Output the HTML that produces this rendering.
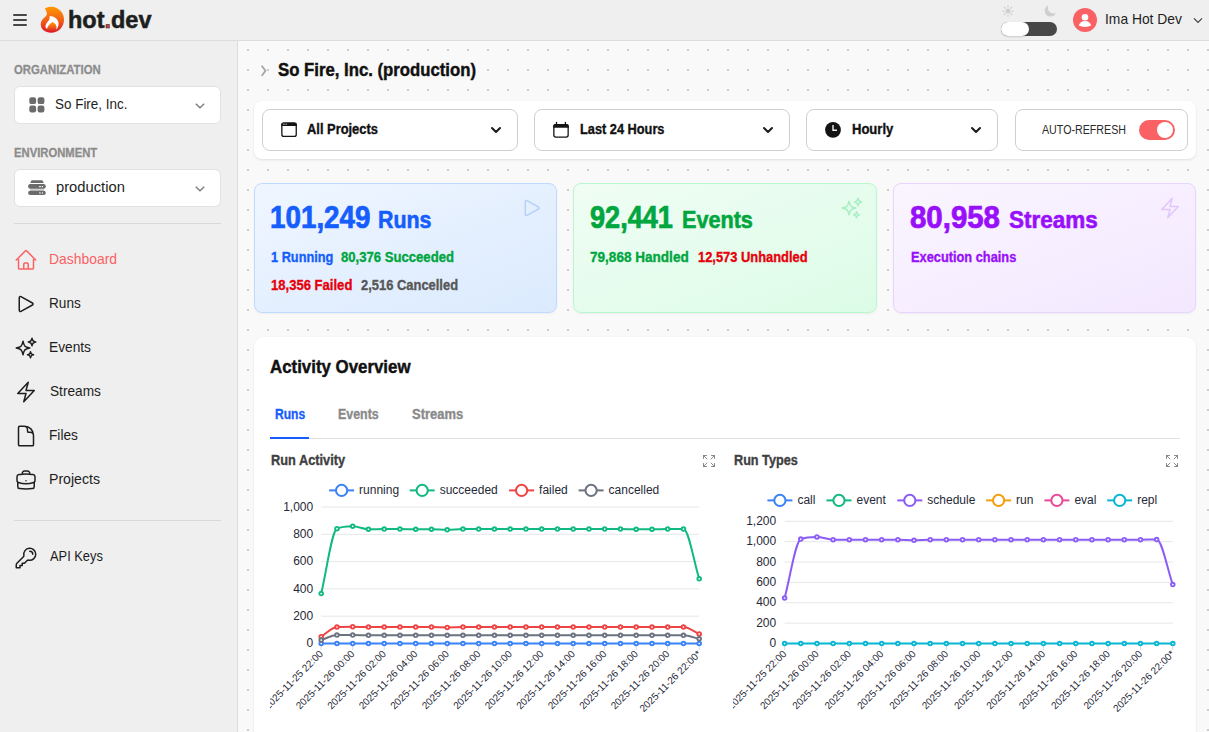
<!DOCTYPE html><html><head><meta charset="utf-8"><title>hot.dev</title><style>
html,body{margin:0;padding:0;}
body{width:1209px;height:732px;overflow:hidden;position:relative;background:#f9f9f9;font-family:"Liberation Sans", sans-serif;}
.t{position:absolute;white-space:nowrap;}
.b{position:absolute;box-sizing:border-box;}
.i{position:absolute;overflow:visible;}
</style></head><body>
<div class="b" style="left:238px;top:41px;width:971px;height:691px;background-color:#f9f9f9;background-image:radial-gradient(circle at 10px 9px,#cdcdcd 0.9px,transparent 1.2px);background-size:20px 20px;background-position:0px 0px;"></div>
<div class="b" style="left:0px;top:0px;width:1209px;height:40px;background:#efefef;"></div>
<div class="b" style="left:0px;top:40px;width:1209px;height:1px;background:#dcdcdc;"></div>
<div class="b" style="left:0px;top:41px;width:237px;height:691px;background:#efefef;"></div>
<div class="b" style="left:237px;top:41px;width:1px;height:691px;background:#dcdcdc;"></div>
<div class="b" style="left:13px;top:14px;width:14px;height:2px;background:#474747;border-radius:1px;"></div>
<div class="b" style="left:13px;top:19px;width:14px;height:2px;background:#474747;border-radius:1px;"></div>
<div class="b" style="left:13px;top:24px;width:14px;height:2px;background:#474747;border-radius:1px;"></div>
<svg class="i" style="left:36px;top:2px;" width="34" height="34" viewBox="0 0 34 34"><defs><linearGradient id="fl" x1="0" y1="0" x2="0" y2="1"><stop offset="0" stop-color="#ff9800"/><stop offset="0.5" stop-color="#f26318"/><stop offset="1" stop-color="#d91a26"/></linearGradient></defs>
<path d="M8.8 6.6 C12 4.5 17 4 20.5 6 C25.5 8.5 28.2 13 28 18 C27.8 25.5 22 30.8 15.2 30.8 C9 30.8 4.6 26.8 4.7 22 C4.8 19 6.8 16.8 9 15 C11 13.3 11.5 11.5 10.4 9.5 C10 8.5 9.5 7.5 8.8 6.6 Z" fill="url(#fl)"/>
<path d="M13.6 14 C18 14 22.5 17 22.6 21.5 C22.7 24.8 21.2 27 19.8 27.8 L10.2 26.4 C9.2 25 9.2 23.3 10.5 21.3 C11.8 19.3 14 18.2 13.6 14 Z" fill="#fff"/>
<path d="M16.3 20 C19 21 20.8 23 20.6 26 C20.4 28.5 18.5 29.8 15.5 29.8 C13 29.8 11 29 10.8 27.6 C11.5 25 13 22 16.3 20 Z" fill="url(#fl)"/></svg>
<div class="t" style="left:68.49px;top:8.78px;font-size:23.2px;line-height:23.2px;font-weight:700;color:#1e1e1e;letter-spacing:0.000px;transform:scaleX(1.0116);transform-origin:0 0;-webkit-text-stroke:0.56px #1e1e1e;">hot<span style="color:#e53935">.</span>dev</div>
<svg class="i" style="left:1002px;top:5px;" width="12" height="12" viewBox="0 0 24 24"><circle cx="12" cy="12" r="5" fill="#cfcfcf"/><g stroke="#cfcfcf" stroke-width="2.5" stroke-linecap="round"><path d="M12 1.5v2.5M12 20v2.5M1.5 12h2.5M20 12h2.5M4.6 4.6l1.8 1.8M17.6 17.6l1.8 1.8M4.6 19.4l1.8-1.8M17.6 6.4l1.8-1.8"/></g></svg>
<svg class="i" style="left:1043px;top:4px;" width="14" height="14" viewBox="0 0 24 24"><path d="M21.75 15.5A9.72 9.72 0 0 1 18 16.25 9.75 9.75 0 0 1 8.25 6.5c0-1.33.27-2.6.75-3.75A9.75 9.75 0 0 0 3 11.75 9.75 9.75 0 0 0 12.75 21.5a9.75 9.75 0 0 0 9-6Z" fill="#cfcfcf"/></svg>
<div class="b" style="left:1001px;top:22px;width:56px;height:14px;background:#474747;border-radius:7px;"></div>
<div class="b" style="left:1001px;top:22px;width:28px;height:14px;background:#fff;border-radius:7px;box-shadow:0 1px 2px rgba(0,0,0,0.15);"></div>
<div class="b" style="left:1073px;top:8px;width:24px;height:24px;background:#fa6164;border-radius:50%;"></div>
<svg class="i" style="left:1073px;top:8px;" width="24" height="24" viewBox="0 0 24 24"><circle cx="12" cy="9.3" r="3.3" fill="#fff"/><path d="M5.8 17.6c0.6-2.9 3.2-4.6 6.2-4.6s5.6 1.7 6.2 4.6c-1.6 0.9-3.9 1.3-6.2 1.3s-4.6-0.4-6.2-1.3z" fill="#fff"/></svg>
<div class="t" style="left:1104.65px;top:11.68px;font-size:14.5px;line-height:14.5px;font-weight:400;color:#1e1e1e;letter-spacing:0.000px;transform:scaleX(0.9548);transform-origin:0 0;">Ima Hot Dev</div>
<svg class="i" style="left:1192px;top:16px;" width="12" height="9" viewBox="0 0 12 9"><path d="M2 2.4 6 6.4 10 2.4" fill="none" stroke="#444" stroke-width="1.3"/></svg>
<div class="t" style="left:14.20px;top:64.34px;font-size:12.3px;line-height:12.3px;font-weight:700;color:#8c8c8c;letter-spacing:0.000px;transform:scaleX(0.9218);transform-origin:0 0;-webkit-text-stroke:0.30px #8c8c8c;">ORGANIZATION</div>
<div class="b" style="left:14px;top:86px;width:207px;height:38px;background:#fff;border:1px solid #e2e2e2;border-radius:6px;"></div>
<svg class="i" style="left:29px;top:97px;" width="16" height="16" viewBox="0 0 16 16"><rect x="0.3" y="0.3" width="6.8" height="6.8" rx="2.2" fill="#6b6b6b"/><rect x="8.6" y="0.3" width="6.8" height="6.8" rx="2.2" fill="#6b6b6b"/><rect x="0.3" y="8.6" width="6.8" height="6.8" rx="2.2" fill="#6b6b6b"/><rect x="8.6" y="8.6" width="6.8" height="6.8" rx="2.2" fill="#6b6b6b"/></svg>
<div class="t" style="left:55.20px;top:96.67px;font-size:14.5px;line-height:14.5px;font-weight:400;color:#1e1e1e;letter-spacing:0.000px;transform:scaleX(0.9269);transform-origin:0 0;">So Fire, Inc.</div>
<svg class="i" style="left:195px;top:103px;" width="10" height="6" viewBox="0 0 10 6"><path d="M0.8 0.8 5 4.8 9.2 0.8" fill="none" stroke="#7a7a7a" stroke-width="1.3"/></svg>
<div class="t" style="left:14.30px;top:146.74px;font-size:12.3px;line-height:12.3px;font-weight:700;color:#8c8c8c;letter-spacing:0.000px;transform:scaleX(0.9162);transform-origin:0 0;-webkit-text-stroke:0.30px #8c8c8c;">ENVIRONMENT</div>
<div class="b" style="left:14px;top:169px;width:207px;height:38px;background:#fff;border:1px solid #e2e2e2;border-radius:6px;"></div>
<svg class="i" style="left:24px;top:176px;" width="26" height="24" viewBox="0 0 26 24"><path d="M6.2 7 7.6 4.2H18.4L19.8 7Z" fill="#6b6b6b"/><rect x="6" y="12.6" width="14" height="2.4" fill="#cfcfcf"/><rect x="4.1" y="8" width="17.7" height="4.8" rx="2.3" fill="#6b6b6b"/><rect x="4.1" y="14.8" width="17.7" height="4.3" rx="2.1" fill="#6b6b6b"/><g fill="#fff"><rect x="15.2" y="10" width="1.6" height="1.2"/><rect x="17.8" y="10" width="1.2" height="1.2"/><rect x="15.2" y="16.4" width="1.4" height="1.2"/><rect x="17.8" y="16.4" width="1.2" height="1.2"/></g></svg>
<div class="t" style="left:55.60px;top:179.68px;font-size:14.5px;line-height:14.5px;font-weight:400;color:#1e1e1e;letter-spacing:0.000px;transform:scaleX(1.0170);transform-origin:0 0;">production</div>
<svg class="i" style="left:195px;top:186px;" width="10" height="6" viewBox="0 0 10 6"><path d="M0.8 0.8 5 4.8 9.2 0.8" fill="none" stroke="#7a7a7a" stroke-width="1.3"/></svg>
<div class="b" style="left:14px;top:223px;width:207px;height:1px;background:#d9d9d9;"></div>
<div class="b" style="left:14px;top:520px;width:207px;height:1px;background:#d9d9d9;"></div>
<svg class="i" style="left:14px;top:248px;" width="24" height="24" viewBox="0 0 24 24"><path d="m2.25 12 8.954-8.955c.44-.439 1.152-.439 1.591 0L21.75 12M4.5 9.75v10.125c0 .621.504 1.125 1.125 1.125H9.75v-4.875c0-.621.504-1.125 1.125-1.125h2.25c.621 0 1.125.504 1.125 1.125V21h4.125c.621 0 1.125-.504 1.125-1.125V9.75M8.25 21h8.25" fill="none" stroke="#fa6164" stroke-width="1.5" stroke-linecap="round" stroke-linejoin="round"/></svg>
<div class="t" style="left:48.94px;top:251.68px;font-size:14.5px;line-height:14.5px;font-weight:400;color:#fa6164;letter-spacing:0.000px;transform:scaleX(0.9589);transform-origin:0 0;">Dashboard</div>
<svg class="i" style="left:14px;top:292px;" width="24" height="24" viewBox="0 0 24 24"><path d="M5.25 5.653c0-.856.917-1.398 1.667-.986l11.54 6.347a1.125 1.125 0 0 1 0 1.972l-11.54 6.347a1.125 1.125 0 0 1-1.667-.986V5.653Z" fill="none" stroke="#1e1e1e" stroke-width="1.5" stroke-linecap="round" stroke-linejoin="round"/></svg>
<div class="t" style="left:48.96px;top:295.68px;font-size:14.5px;line-height:14.5px;font-weight:400;color:#1e1e1e;letter-spacing:0.000px;transform:scaleX(0.9387);transform-origin:0 0;">Runs</div>
<svg class="i" style="left:14px;top:336px;" width="24" height="24" viewBox="0 0 24 24"><path d="M9.813 15.904 9 18.75l-.813-2.846a4.5 4.5 0 0 0-3.09-3.09L2.25 12l2.846-.813a4.5 4.5 0 0 0 3.09-3.09L9 5.25l.813 2.846a4.5 4.5 0 0 0 3.09 3.09L15.75 12l-2.846.813a4.5 4.5 0 0 0-3.09 3.09ZM18.259 8.715 18 9.75l-.259-1.035a3.375 3.375 0 0 0-2.455-2.456L14.25 6l1.036-.259a3.375 3.375 0 0 0 2.455-2.456L18 2.25l.259 1.035a3.375 3.375 0 0 0 2.456 2.456L21.75 6l-1.035.259a3.375 3.375 0 0 0-2.456 2.456ZM16.894 20.567 16.5 21.75l-.394-1.183a2.25 2.25 0 0 0-1.423-1.423L13.5 18.75l1.183-.394a2.25 2.25 0 0 0 1.423-1.423l.394-1.183.394 1.183a2.25 2.25 0 0 0 1.423 1.423l1.183.394-1.183.394a2.25 2.25 0 0 0-1.423 1.423Z" fill="none" stroke="#1e1e1e" stroke-width="1.5" stroke-linecap="round" stroke-linejoin="round"/></svg>
<div class="t" style="left:48.95px;top:339.68px;font-size:14.5px;line-height:14.5px;font-weight:400;color:#1e1e1e;letter-spacing:0.000px;transform:scaleX(0.9471);transform-origin:0 0;">Events</div>
<svg class="i" style="left:14px;top:380px;" width="24" height="24" viewBox="0 0 24 24"><path d="m3.75 13.5 10.5-11.25L12 10.5h8.25L9.75 21.75 12 13.5H3.75Z" fill="none" stroke="#1e1e1e" stroke-width="1.5" stroke-linecap="round" stroke-linejoin="round"/></svg>
<div class="t" style="left:49.90px;top:383.68px;font-size:14.5px;line-height:14.5px;font-weight:400;color:#1e1e1e;letter-spacing:0.000px;transform:scaleX(0.9435);transform-origin:0 0;">Streams</div>
<svg class="i" style="left:14px;top:424px;" width="24" height="24" viewBox="0 0 24 24"><path d="M19.5 14.25v-2.625a3.375 3.375 0 0 0-3.375-3.375h-1.5A1.125 1.125 0 0 1 13.5 7.125v-1.5a3.375 3.375 0 0 0-3.375-3.375H8.25m2.25 0H5.625c-.621 0-1.125.504-1.125 1.125v17.25c0 .621.504 1.125 1.125 1.125h12.75c.621 0 1.125-.504 1.125-1.125V11.25a9 9 0 0 0-9-9Z" fill="none" stroke="#1e1e1e" stroke-width="1.5" stroke-linecap="round" stroke-linejoin="round"/></svg>
<div class="t" style="left:48.96px;top:427.68px;font-size:14.5px;line-height:14.5px;font-weight:400;color:#1e1e1e;letter-spacing:0.000px;transform:scaleX(0.9433);transform-origin:0 0;">Files</div>
<svg class="i" style="left:14px;top:468px;" width="24" height="24" viewBox="0 0 24 24"><path d="M20.25 14.15v4.25c0 1.094-.787 2.036-1.872 2.18-2.087.277-4.216.42-6.378.42s-4.291-.143-6.378-.42c-1.085-.144-1.872-1.086-1.872-2.18v-4.25m16.5 0a2.18 2.18 0 0 0 .75-1.661V8.706c0-1.081-.768-2.015-1.837-2.175a48.114 48.114 0 0 0-3.413-.387m4.5 8.006c-.194.165-.42.295-.673.38A23.978 23.978 0 0 1 12 15.75c-2.648 0-5.195-.429-7.577-1.22a2.016 2.016 0 0 1-.673-.38m0 0A2.18 2.18 0 0 1 3 12.489V8.706c0-1.081.768-2.015 1.837-2.175a48.111 48.111 0 0 1 3.413-.387m7.5 0V5.25A2.25 2.25 0 0 0 13.5 3h-3a2.25 2.25 0 0 0-2.25 2.25v.894m7.5 0a48.667 48.667 0 0 0-7.5 0M12 12.75h.008v.008H12v-.008Z" fill="none" stroke="#1e1e1e" stroke-width="1.5" stroke-linecap="round" stroke-linejoin="round"/></svg>
<div class="t" style="left:48.93px;top:471.68px;font-size:14.5px;line-height:14.5px;font-weight:400;color:#1e1e1e;letter-spacing:0.000px;transform:scaleX(0.9740);transform-origin:0 0;">Projects</div>
<svg class="i" style="left:14px;top:546px;" width="24" height="24" viewBox="0 0 24 24"><path d="M15.75 5.25a3 3 0 0 1 3 3m3 0a6 6 0 0 1-7.029 5.912c-.563-.097-1.159.026-1.563.43L10.5 17.25H8.25v2.25H6v2.25H2.25v-2.818c0-.597.237-1.17.659-1.591l6.499-6.499c.404-.404.527-1 .43-1.563A6 6 0 1 1 21.75 8.25Z" fill="none" stroke="#1e1e1e" stroke-width="1.5" stroke-linecap="round" stroke-linejoin="round"/></svg>
<div class="t" style="left:49.90px;top:548.67px;font-size:14.5px;line-height:14.5px;font-weight:400;color:#1e1e1e;letter-spacing:0.000px;transform:scaleX(0.8857);transform-origin:0 0;">API Keys</div>
<svg class="i" style="left:255px;top:60px;" width="20" height="22" viewBox="0 0 20 22"><path d="M7.1 6.3 10.5 10.8 7.2 15.3" fill="none" stroke="#a6a6a6" stroke-width="1.9" stroke-linecap="round" stroke-linejoin="round"/></svg>
<div class="t" style="left:278.20px;top:61.10px;font-size:18px;line-height:18px;font-weight:700;color:#111;letter-spacing:0.000px;transform:scaleX(0.9296);transform-origin:0 0;-webkit-text-stroke:0.43px #111;">So Fire, Inc. (production)</div>
<div class="b" style="left:254px;top:101px;width:942px;height:58px;background:#fff;border-radius:8px;box-shadow:0 1px 3px rgba(0,0,0,0.07),0 1px 2px rgba(0,0,0,0.04);"></div>
<div class="b" style="left:262px;top:109px;width:256px;height:42px;background:#fff;border:1px solid #cfcfcf;border-radius:8px;"></div>
<div class="b" style="left:534px;top:109px;width:256px;height:42px;background:#fff;border:1px solid #cfcfcf;border-radius:8px;"></div>
<div class="b" style="left:806px;top:109px;width:192px;height:42px;background:#fff;border:1px solid #cfcfcf;border-radius:8px;"></div>
<div class="b" style="left:1015px;top:109px;width:173px;height:42px;background:#fff;border:1px solid #cfcfcf;border-radius:8px;"></div>
<svg class="i" style="left:491px;top:127px;" width="10" height="6" viewBox="0 0 10 6"><path d="M1 1 5 5 9 1" fill="none" stroke="#1a1a1a" stroke-width="2" stroke-linecap="round" stroke-linejoin="round"/></svg>
<svg class="i" style="left:763px;top:127px;" width="10" height="6" viewBox="0 0 10 6"><path d="M1 1 5 5 9 1" fill="none" stroke="#1a1a1a" stroke-width="2" stroke-linecap="round" stroke-linejoin="round"/></svg>
<svg class="i" style="left:971px;top:127px;" width="10" height="6" viewBox="0 0 10 6"><path d="M1 1 5 5 9 1" fill="none" stroke="#1a1a1a" stroke-width="2" stroke-linecap="round" stroke-linejoin="round"/></svg>
<svg class="i" style="left:276px;top:116px;" width="26" height="26" viewBox="0 0 26 26"><rect x="5.85" y="7.25" width="14.4" height="13.2" rx="2" fill="none" stroke="#141414" stroke-width="1.3"/><path d="M5.2 10V8.9Q5.2 6.6 7.5 6.6H18.6Q20.9 6.6 20.9 8.9V10Z" fill="#141414"/><g fill="#fff"><rect x="6.9" y="7.7" width="0.9" height="0.9"/><rect x="8.4" y="7.7" width="0.9" height="0.9"/><rect x="9.9" y="7.7" width="0.9" height="0.9"/></g></svg>
<div class="t" style="left:307.20px;top:122.37px;font-size:14.5px;line-height:14.5px;font-weight:700;color:#111;letter-spacing:0.000px;transform:scaleX(0.8882);transform-origin:0 0;-webkit-text-stroke:0.35px #111;">All Projects</div>
<svg class="i" style="left:548px;top:116px;" width="26" height="26" viewBox="0 0 26 26"><rect x="5.85" y="8.65" width="14.3" height="12.4" rx="2" fill="none" stroke="#141414" stroke-width="1.3"/><path d="M5.2 11.7V10.3Q5.2 8 7.5 8H18.5Q20.8 8 20.8 10.3V11.7Z" fill="#141414"/><path d="M8.5 6.3V8.6M17.4 6.3V8.6" stroke="#141414" stroke-width="1.3" stroke-linecap="round"/></svg>
<div class="t" style="left:579.60px;top:122.37px;font-size:14.5px;line-height:14.5px;font-weight:700;color:#111;letter-spacing:0.000px;transform:scaleX(0.8807);transform-origin:0 0;-webkit-text-stroke:0.35px #111;">Last 24 Hours</div>
<svg class="i" style="left:825px;top:122px;" width="16" height="16" viewBox="0 0 16 16"><circle cx="8" cy="7.8" r="7.9" fill="#141414"/><path d="M8 2.9V8.2H12" fill="none" stroke="#f2f2f2" stroke-width="1.4"/></svg>
<div class="t" style="left:851.70px;top:122.37px;font-size:14.5px;line-height:14.5px;font-weight:700;color:#111;letter-spacing:0.000px;transform:scaleX(0.8984);transform-origin:0 0;-webkit-text-stroke:0.35px #111;">Hourly</div>
<div class="t" style="left:1042.00px;top:124.47px;font-size:12.5px;line-height:12.5px;font-weight:400;color:#2a2a2a;letter-spacing:0.000px;transform:scaleX(0.8540);transform-origin:0 0;">AUTO-REFRESH</div>
<div class="b" style="left:1139px;top:120px;width:36px;height:20px;background:#fa6164;border-radius:10px;"></div>
<div class="b" style="left:1157px;top:122px;width:16px;height:16px;background:#fff;border-radius:50%;"></div>
<div class="b" style="left:254px;top:183px;width:303px;height:130px;background:linear-gradient(160deg,#eff6ff 0%,#dbeafe 100%);border:1px solid #bedbff;border-radius:8px;box-shadow:0 1px 2px rgba(0,0,0,0.05);"></div>
<div class="b" style="left:573px;top:183px;width:304px;height:130px;background:linear-gradient(160deg,#f0fdf4 0%,#dcfce7 100%);border:1px solid #b9f8cf;border-radius:8px;box-shadow:0 1px 2px rgba(0,0,0,0.05);"></div>
<div class="b" style="left:893px;top:183px;width:303px;height:130px;background:linear-gradient(160deg,#faf5ff 0%,#f3e8ff 100%);border:1px solid #e9d4ff;border-radius:8px;box-shadow:0 1px 2px rgba(0,0,0,0.05);"></div>
<svg class="i" style="left:520px;top:196px;" width="24" height="24" viewBox="0 0 24 24"><path d="M5.25 5.653c0-.856.917-1.398 1.667-.986l11.54 6.347a1.125 1.125 0 0 1 0 1.972l-11.54 6.347a1.125 1.125 0 0 1-1.667-.986V5.653Z" fill="none" stroke="#b6d0fb" stroke-width="1.5" stroke-linecap="round" stroke-linejoin="round"/></svg>
<svg class="i" style="left:840px;top:196px;" width="24" height="24" viewBox="0 0 24 24"><path d="M9.813 15.904 9 18.75l-.813-2.846a4.5 4.5 0 0 0-3.09-3.09L2.25 12l2.846-.813a4.5 4.5 0 0 0 3.09-3.09L9 5.25l.813 2.846a4.5 4.5 0 0 0 3.09 3.09L15.75 12l-2.846.813a4.5 4.5 0 0 0-3.09 3.09ZM18.259 8.715 18 9.75l-.259-1.035a3.375 3.375 0 0 0-2.455-2.456L14.25 6l1.036-.259a3.375 3.375 0 0 0 2.455-2.456L18 2.25l.259 1.035a3.375 3.375 0 0 0 2.456 2.456L21.75 6l-1.035.259a3.375 3.375 0 0 0-2.456 2.456ZM16.894 20.567 16.5 21.75l-.394-1.183a2.25 2.25 0 0 0-1.423-1.423L13.5 18.75l1.183-.394a2.25 2.25 0 0 0 1.423-1.423l.394-1.183.394 1.183a2.25 2.25 0 0 0 1.423 1.423l1.183.394-1.183.394a2.25 2.25 0 0 0-1.423 1.423Z" fill="none" stroke="#a7eec3" stroke-width="1.5" stroke-linecap="round" stroke-linejoin="round"/></svg>
<svg class="i" style="left:1158px;top:196px;" width="24" height="24" viewBox="0 0 24 24"><path d="m3.75 13.5 10.5-11.25L12 10.5h8.25L9.75 21.75 12 13.5H3.75Z" fill="none" stroke="#e2c6fa" stroke-width="1.5" stroke-linecap="round" stroke-linejoin="round"/></svg>
<div class="t" style="left:270.39px;top:202.07px;font-size:30.5px;line-height:30.5px;font-weight:700;color:#155dfc;letter-spacing:0.000px;transform:scaleX(0.9115);transform-origin:0 0;-webkit-text-stroke:0.74px #155dfc;">101,249</div>
<div class="t" style="left:377.89px;top:209.03px;font-size:23.5px;line-height:23.5px;font-weight:700;color:#155dfc;letter-spacing:0.000px;transform:scaleX(0.9102);transform-origin:0 0;-webkit-text-stroke:0.57px #155dfc;">Runs</div>
<div class="t" style="left:271.20px;top:249.68px;font-size:14.5px;line-height:14.5px;font-weight:700;color:#155dfc;letter-spacing:0.000px;transform:scaleX(0.8797);transform-origin:0 0;-webkit-text-stroke:0.35px #155dfc;">1 Running</div>
<div class="t" style="left:341.40px;top:249.68px;font-size:14.5px;line-height:14.5px;font-weight:700;color:#00a63e;letter-spacing:0.000px;transform:scaleX(0.9042);transform-origin:0 0;-webkit-text-stroke:0.35px #00a63e;">80,376 Succeeded</div>
<div class="t" style="left:271.20px;top:277.68px;font-size:14.5px;line-height:14.5px;font-weight:700;color:#e7000b;letter-spacing:0.000px;transform:scaleX(0.9014);transform-origin:0 0;-webkit-text-stroke:0.35px #e7000b;">18,356 Failed</div>
<div class="t" style="left:360.60px;top:277.68px;font-size:14.5px;line-height:14.5px;font-weight:700;color:#575757;letter-spacing:0.000px;transform:scaleX(0.8920);transform-origin:0 0;-webkit-text-stroke:0.35px #575757;">2,516 Cancelled</div>
<div class="t" style="left:590.01px;top:202.07px;font-size:30.5px;line-height:30.5px;font-weight:700;color:#00a63e;letter-spacing:0.000px;transform:scaleX(0.8882);transform-origin:0 0;-webkit-text-stroke:0.74px #00a63e;">92,441</div>
<div class="t" style="left:681.88px;top:209.03px;font-size:23.5px;line-height:23.5px;font-weight:700;color:#00a63e;letter-spacing:0.000px;transform:scaleX(0.9198);transform-origin:0 0;-webkit-text-stroke:0.57px #00a63e;">Events</div>
<div class="t" style="left:590.30px;top:249.68px;font-size:14.5px;line-height:14.5px;font-weight:700;color:#00a63e;letter-spacing:0.000px;transform:scaleX(0.9349);transform-origin:0 0;-webkit-text-stroke:0.35px #00a63e;">79,868 Handled</div>
<div class="t" style="left:697.50px;top:249.68px;font-size:14.5px;line-height:14.5px;font-weight:700;color:#e7000b;letter-spacing:0.000px;transform:scaleX(0.8886);transform-origin:0 0;-webkit-text-stroke:0.35px #e7000b;">12,573 Unhandled</div>
<div class="t" style="left:910.40px;top:202.07px;font-size:30.5px;line-height:30.5px;font-weight:700;color:#9810fa;letter-spacing:0.000px;transform:scaleX(0.9644);transform-origin:0 0;-webkit-text-stroke:0.74px #9810fa;">80,958</div>
<div class="t" style="left:1009.00px;top:209.03px;font-size:23.5px;line-height:23.5px;font-weight:700;color:#9810fa;letter-spacing:0.000px;transform:scaleX(0.9571);transform-origin:0 0;-webkit-text-stroke:0.57px #9810fa;">Streams</div>
<div class="t" style="left:910.80px;top:249.68px;font-size:14.5px;line-height:14.5px;font-weight:700;color:#9810fa;letter-spacing:0.000px;transform:scaleX(0.8826);transform-origin:0 0;-webkit-text-stroke:0.35px #9810fa;">Execution chains</div>
<div class="b" style="left:254px;top:337px;width:942px;height:463px;background:#fff;border-radius:10px;box-shadow:0 1px 3px rgba(0,0,0,0.07),0 1px 2px rgba(0,0,0,0.04);"></div>
<div class="t" style="left:269.90px;top:357.64px;font-size:18.3px;line-height:18.3px;font-weight:700;color:#111;letter-spacing:0.000px;transform:scaleX(0.9217);transform-origin:0 0;-webkit-text-stroke:0.44px #111;">Activity Overview</div>
<div class="b" style="left:270px;top:438px;width:910px;height:1px;background:#e2e2e2;"></div>
<div class="b" style="left:270px;top:437px;width:39px;height:2px;background:#155dfc;"></div>
<div class="t" style="left:274.70px;top:406.80px;font-size:14px;line-height:14px;font-weight:700;color:#155dfc;letter-spacing:0.000px;transform:scaleX(0.8605);transform-origin:0 0;-webkit-text-stroke:0.34px #155dfc;">Runs</div>
<div class="t" style="left:337.80px;top:406.80px;font-size:14px;line-height:14px;font-weight:700;color:#8a8a8a;letter-spacing:0.000px;transform:scaleX(0.8867);transform-origin:0 0;-webkit-text-stroke:0.34px #8a8a8a;">Events</div>
<div class="t" style="left:411.50px;top:406.80px;font-size:14px;line-height:14px;font-weight:700;color:#8a8a8a;letter-spacing:0.000px;transform:scaleX(0.9248);transform-origin:0 0;-webkit-text-stroke:0.34px #8a8a8a;">Streams</div>
<div class="t" style="left:270.50px;top:452.78px;font-size:14.5px;line-height:14.5px;font-weight:700;color:#404040;letter-spacing:0.000px;transform:scaleX(0.8814);transform-origin:0 0;-webkit-text-stroke:0.35px #404040;">Run Activity</div>
<div class="t" style="left:733.90px;top:452.68px;font-size:14.5px;line-height:14.5px;font-weight:700;color:#404040;letter-spacing:0.000px;transform:scaleX(0.8728);transform-origin:0 0;-webkit-text-stroke:0.35px #404040;">Run Types</div>
<svg class="i" style="left:701px;top:453px;" width="16" height="16" viewBox="0 0 24 24"><path d="M3.75 3.75v4.5m0-4.5h4.5m-4.5 0L9 9M3.75 20.25v-4.5m0 4.5h4.5m-4.5 0L9 15M20.25 3.75h-4.5m4.5 0v4.5m0-4.5L15 9m5.25 11.25h-4.5m4.5 0v-4.5m0 4.5L15 15" fill="none" stroke="#858585" stroke-width="1.45" stroke-linecap="round" stroke-linejoin="round"/></svg>
<svg class="i" style="left:1164px;top:453px;" width="16" height="16" viewBox="0 0 24 24"><path d="M3.75 3.75v4.5m0-4.5h4.5m-4.5 0L9 9M3.75 20.25v-4.5m0 4.5h4.5m-4.5 0L9 15M20.25 3.75h-4.5m4.5 0v4.5m0-4.5L15 9m5.25 11.25h-4.5m4.5 0v-4.5m0 4.5L15 15" fill="none" stroke="#858585" stroke-width="1.45" stroke-linecap="round" stroke-linejoin="round"/></svg>
<svg class="i" style="left:0;top:0;" width="1209" height="732" viewBox="0 0 1209 732" font-family="Liberation Sans, sans-serif"><defs><clipPath id="cl"><rect x="270" y="470" width="446" height="262"/></clipPath><clipPath id="cr"><rect x="733" y="470" width="447" height="262"/></clipPath></defs><g clip-path="url(#cl)"><line x1="321.20" y1="643.50" x2="699.20" y2="643.50" stroke="#e5e7eb" stroke-width="1"/><text x="313.20" y="647.10" text-anchor="end" font-size="12" fill="#1f2937">0</text><line x1="321.20" y1="616.20" x2="699.20" y2="616.20" stroke="#e5e7eb" stroke-width="1"/><text x="313.20" y="619.80" text-anchor="end" font-size="12" fill="#1f2937">200</text><line x1="321.20" y1="588.90" x2="699.20" y2="588.90" stroke="#e5e7eb" stroke-width="1"/><text x="313.20" y="592.50" text-anchor="end" font-size="12" fill="#1f2937">400</text><line x1="321.20" y1="561.60" x2="699.20" y2="561.60" stroke="#e5e7eb" stroke-width="1"/><text x="313.20" y="565.20" text-anchor="end" font-size="12" fill="#1f2937">600</text><line x1="321.20" y1="534.30" x2="699.20" y2="534.30" stroke="#e5e7eb" stroke-width="1"/><text x="313.20" y="537.90" text-anchor="end" font-size="12" fill="#1f2937">800</text><line x1="321.20" y1="507.00" x2="699.20" y2="507.00" stroke="#e5e7eb" stroke-width="1"/><text x="313.20" y="510.60" text-anchor="end" font-size="12" fill="#1f2937">1,000</text><line x1="321.20" y1="645.50" x2="321.20" y2="650.00" stroke="#d8dbe0" stroke-width="1"/><line x1="352.70" y1="645.50" x2="352.70" y2="650.00" stroke="#d8dbe0" stroke-width="1"/><line x1="384.20" y1="645.50" x2="384.20" y2="650.00" stroke="#d8dbe0" stroke-width="1"/><line x1="415.70" y1="645.50" x2="415.70" y2="650.00" stroke="#d8dbe0" stroke-width="1"/><line x1="447.20" y1="645.50" x2="447.20" y2="650.00" stroke="#d8dbe0" stroke-width="1"/><line x1="478.70" y1="645.50" x2="478.70" y2="650.00" stroke="#d8dbe0" stroke-width="1"/><line x1="510.20" y1="645.50" x2="510.20" y2="650.00" stroke="#d8dbe0" stroke-width="1"/><line x1="541.70" y1="645.50" x2="541.70" y2="650.00" stroke="#d8dbe0" stroke-width="1"/><line x1="573.20" y1="645.50" x2="573.20" y2="650.00" stroke="#d8dbe0" stroke-width="1"/><line x1="604.70" y1="645.50" x2="604.70" y2="650.00" stroke="#d8dbe0" stroke-width="1"/><line x1="636.20" y1="645.50" x2="636.20" y2="650.00" stroke="#d8dbe0" stroke-width="1"/><line x1="667.70" y1="645.50" x2="667.70" y2="650.00" stroke="#d8dbe0" stroke-width="1"/><line x1="699.20" y1="645.50" x2="699.20" y2="650.00" stroke="#d8dbe0" stroke-width="1"/><text transform="translate(323.70 654.50) rotate(-45)" text-anchor="end" font-size="10" fill="#1f2937">2025-11-25 22:00</text><text transform="translate(355.20 654.50) rotate(-45)" text-anchor="end" font-size="10" fill="#1f2937">2025-11-26 00:00</text><text transform="translate(386.70 654.50) rotate(-45)" text-anchor="end" font-size="10" fill="#1f2937">2025-11-26 02:00</text><text transform="translate(418.20 654.50) rotate(-45)" text-anchor="end" font-size="10" fill="#1f2937">2025-11-26 04:00</text><text transform="translate(449.70 654.50) rotate(-45)" text-anchor="end" font-size="10" fill="#1f2937">2025-11-26 06:00</text><text transform="translate(481.20 654.50) rotate(-45)" text-anchor="end" font-size="10" fill="#1f2937">2025-11-26 08:00</text><text transform="translate(512.70 654.50) rotate(-45)" text-anchor="end" font-size="10" fill="#1f2937">2025-11-26 10:00</text><text transform="translate(544.20 654.50) rotate(-45)" text-anchor="end" font-size="10" fill="#1f2937">2025-11-26 12:00</text><text transform="translate(575.70 654.50) rotate(-45)" text-anchor="end" font-size="10" fill="#1f2937">2025-11-26 14:00</text><text transform="translate(607.20 654.50) rotate(-45)" text-anchor="end" font-size="10" fill="#1f2937">2025-11-26 16:00</text><text transform="translate(638.70 654.50) rotate(-45)" text-anchor="end" font-size="10" fill="#1f2937">2025-11-26 18:00</text><text transform="translate(670.20 654.50) rotate(-45)" text-anchor="end" font-size="10" fill="#1f2937">2025-11-26 20:00</text><text transform="translate(701.70 654.50) rotate(-45)" text-anchor="end" font-size="10" fill="#1f2937">2025-11-26 22:00*</text><path d="M321.20 643.50C326.45 643.50 331.70 643.50 336.95 643.50C342.20 643.50 347.45 643.50 352.70 643.50C357.95 643.50 363.20 643.50 368.45 643.50C373.70 643.50 378.95 643.50 384.20 643.50C389.45 643.50 394.70 643.50 399.95 643.50C405.20 643.50 410.45 643.50 415.70 643.50C420.95 643.50 426.20 643.50 431.45 643.50C436.70 643.50 441.95 643.50 447.20 643.50C452.45 643.50 457.70 643.50 462.95 643.50C468.20 643.50 473.45 643.50 478.70 643.50C483.95 643.50 489.20 643.50 494.45 643.50C499.70 643.50 504.95 643.50 510.20 643.50C515.45 643.50 520.70 643.50 525.95 643.50C531.20 643.50 536.45 643.50 541.70 643.50C546.95 643.50 552.20 643.50 557.45 643.50C562.70 643.50 567.95 643.50 573.20 643.50C578.45 643.50 583.70 643.50 588.95 643.50C594.20 643.50 599.45 643.50 604.70 643.50C609.95 643.50 615.20 643.50 620.45 643.50C625.70 643.50 630.95 643.50 636.20 643.50C641.45 643.50 646.70 643.50 651.95 643.50C657.20 643.50 662.45 643.50 667.70 643.50C672.95 643.50 678.20 643.50 683.45 643.50C688.70 643.50 693.95 643.50 699.20 643.50" fill="none" stroke="#3b82f6" stroke-width="2" stroke-linejoin="round"/><circle cx="321.20" cy="643.50" r="1.8" fill="#fff" stroke="#3b82f6" stroke-width="1.9"/><circle cx="336.95" cy="643.50" r="1.8" fill="#fff" stroke="#3b82f6" stroke-width="1.9"/><circle cx="352.70" cy="643.50" r="1.8" fill="#fff" stroke="#3b82f6" stroke-width="1.9"/><circle cx="368.45" cy="643.50" r="1.8" fill="#fff" stroke="#3b82f6" stroke-width="1.9"/><circle cx="384.20" cy="643.50" r="1.8" fill="#fff" stroke="#3b82f6" stroke-width="1.9"/><circle cx="399.95" cy="643.50" r="1.8" fill="#fff" stroke="#3b82f6" stroke-width="1.9"/><circle cx="415.70" cy="643.50" r="1.8" fill="#fff" stroke="#3b82f6" stroke-width="1.9"/><circle cx="431.45" cy="643.50" r="1.8" fill="#fff" stroke="#3b82f6" stroke-width="1.9"/><circle cx="447.20" cy="643.50" r="1.8" fill="#fff" stroke="#3b82f6" stroke-width="1.9"/><circle cx="462.95" cy="643.50" r="1.8" fill="#fff" stroke="#3b82f6" stroke-width="1.9"/><circle cx="478.70" cy="643.50" r="1.8" fill="#fff" stroke="#3b82f6" stroke-width="1.9"/><circle cx="494.45" cy="643.50" r="1.8" fill="#fff" stroke="#3b82f6" stroke-width="1.9"/><circle cx="510.20" cy="643.50" r="1.8" fill="#fff" stroke="#3b82f6" stroke-width="1.9"/><circle cx="525.95" cy="643.50" r="1.8" fill="#fff" stroke="#3b82f6" stroke-width="1.9"/><circle cx="541.70" cy="643.50" r="1.8" fill="#fff" stroke="#3b82f6" stroke-width="1.9"/><circle cx="557.45" cy="643.50" r="1.8" fill="#fff" stroke="#3b82f6" stroke-width="1.9"/><circle cx="573.20" cy="643.50" r="1.8" fill="#fff" stroke="#3b82f6" stroke-width="1.9"/><circle cx="588.95" cy="643.50" r="1.8" fill="#fff" stroke="#3b82f6" stroke-width="1.9"/><circle cx="604.70" cy="643.50" r="1.8" fill="#fff" stroke="#3b82f6" stroke-width="1.9"/><circle cx="620.45" cy="643.50" r="1.8" fill="#fff" stroke="#3b82f6" stroke-width="1.9"/><circle cx="636.20" cy="643.50" r="1.8" fill="#fff" stroke="#3b82f6" stroke-width="1.9"/><circle cx="651.95" cy="643.50" r="1.8" fill="#fff" stroke="#3b82f6" stroke-width="1.9"/><circle cx="667.70" cy="643.50" r="1.8" fill="#fff" stroke="#3b82f6" stroke-width="1.9"/><circle cx="683.45" cy="643.50" r="1.8" fill="#fff" stroke="#3b82f6" stroke-width="1.9"/><circle cx="699.20" cy="643.50" r="1.8" fill="#fff" stroke="#3b82f6" stroke-width="1.9"/><path d="M321.20 593.54C326.45 571.93 331.70 531.16 336.95 528.70C342.20 526.25 347.45 526.25 352.70 526.25C357.95 526.25 363.20 529.25 368.45 529.25C373.70 529.25 378.95 529.11 384.20 529.11C389.45 529.11 394.70 529.11 399.95 529.11C405.20 529.11 410.45 529.25 415.70 529.25C420.95 529.25 426.20 529.25 431.45 529.25C436.70 529.25 441.95 529.80 447.20 529.80C452.45 529.80 457.70 529.11 462.95 529.11C468.20 529.11 473.45 529.11 478.70 529.11C483.95 529.11 489.20 529.11 494.45 529.11C499.70 529.11 504.95 529.11 510.20 529.11C515.45 529.11 520.70 529.11 525.95 529.11C531.20 529.11 536.45 529.11 541.70 529.11C546.95 529.11 552.20 529.11 557.45 529.11C562.70 529.11 567.95 529.11 573.20 529.11C578.45 529.11 583.70 529.11 588.95 529.11C594.20 529.11 599.45 529.11 604.70 529.11C609.95 529.11 615.20 529.11 620.45 529.11C625.70 529.11 630.95 529.25 636.20 529.25C641.45 529.25 646.70 529.25 651.95 529.25C657.20 529.25 662.45 529.11 667.70 529.11C672.95 529.11 678.20 529.11 683.45 529.11C688.70 529.11 693.95 562.24 699.20 578.80" fill="none" stroke="#10b981" stroke-width="2" stroke-linejoin="round"/><circle cx="321.20" cy="593.54" r="1.8" fill="#fff" stroke="#10b981" stroke-width="1.9"/><circle cx="336.95" cy="528.70" r="1.8" fill="#fff" stroke="#10b981" stroke-width="1.9"/><circle cx="352.70" cy="526.25" r="1.8" fill="#fff" stroke="#10b981" stroke-width="1.9"/><circle cx="368.45" cy="529.25" r="1.8" fill="#fff" stroke="#10b981" stroke-width="1.9"/><circle cx="384.20" cy="529.11" r="1.8" fill="#fff" stroke="#10b981" stroke-width="1.9"/><circle cx="399.95" cy="529.11" r="1.8" fill="#fff" stroke="#10b981" stroke-width="1.9"/><circle cx="415.70" cy="529.25" r="1.8" fill="#fff" stroke="#10b981" stroke-width="1.9"/><circle cx="431.45" cy="529.25" r="1.8" fill="#fff" stroke="#10b981" stroke-width="1.9"/><circle cx="447.20" cy="529.80" r="1.8" fill="#fff" stroke="#10b981" stroke-width="1.9"/><circle cx="462.95" cy="529.11" r="1.8" fill="#fff" stroke="#10b981" stroke-width="1.9"/><circle cx="478.70" cy="529.11" r="1.8" fill="#fff" stroke="#10b981" stroke-width="1.9"/><circle cx="494.45" cy="529.11" r="1.8" fill="#fff" stroke="#10b981" stroke-width="1.9"/><circle cx="510.20" cy="529.11" r="1.8" fill="#fff" stroke="#10b981" stroke-width="1.9"/><circle cx="525.95" cy="529.11" r="1.8" fill="#fff" stroke="#10b981" stroke-width="1.9"/><circle cx="541.70" cy="529.11" r="1.8" fill="#fff" stroke="#10b981" stroke-width="1.9"/><circle cx="557.45" cy="529.11" r="1.8" fill="#fff" stroke="#10b981" stroke-width="1.9"/><circle cx="573.20" cy="529.11" r="1.8" fill="#fff" stroke="#10b981" stroke-width="1.9"/><circle cx="588.95" cy="529.11" r="1.8" fill="#fff" stroke="#10b981" stroke-width="1.9"/><circle cx="604.70" cy="529.11" r="1.8" fill="#fff" stroke="#10b981" stroke-width="1.9"/><circle cx="620.45" cy="529.11" r="1.8" fill="#fff" stroke="#10b981" stroke-width="1.9"/><circle cx="636.20" cy="529.25" r="1.8" fill="#fff" stroke="#10b981" stroke-width="1.9"/><circle cx="651.95" cy="529.25" r="1.8" fill="#fff" stroke="#10b981" stroke-width="1.9"/><circle cx="667.70" cy="529.11" r="1.8" fill="#fff" stroke="#10b981" stroke-width="1.9"/><circle cx="683.45" cy="529.11" r="1.8" fill="#fff" stroke="#10b981" stroke-width="1.9"/><circle cx="699.20" cy="578.80" r="1.8" fill="#fff" stroke="#10b981" stroke-width="1.9"/><path d="M321.20 636.67C326.45 633.44 331.70 627.26 336.95 626.98C342.20 626.71 347.45 626.71 352.70 626.71C357.95 626.71 363.20 627.12 368.45 627.12C373.70 627.12 378.95 627.12 384.20 627.12C389.45 627.12 394.70 627.12 399.95 627.12C405.20 627.12 410.45 627.12 415.70 627.12C420.95 627.12 426.20 627.12 431.45 627.12C436.70 627.12 441.95 627.39 447.20 627.39C452.45 627.39 457.70 627.12 462.95 627.12C468.20 627.12 473.45 627.12 478.70 627.12C483.95 627.12 489.20 627.12 494.45 627.12C499.70 627.12 504.95 627.12 510.20 627.12C515.45 627.12 520.70 627.12 525.95 627.12C531.20 627.12 536.45 627.12 541.70 627.12C546.95 627.12 552.20 627.12 557.45 627.12C562.70 627.12 567.95 627.12 573.20 627.12C578.45 627.12 583.70 627.12 588.95 627.12C594.20 627.12 599.45 627.12 604.70 627.12C609.95 627.12 615.20 627.12 620.45 627.12C625.70 627.12 630.95 627.12 636.20 627.12C641.45 627.12 646.70 627.12 651.95 627.12C657.20 627.12 662.45 627.12 667.70 627.12C672.95 627.12 678.20 626.98 683.45 626.98C688.70 626.98 693.95 631.62 699.20 633.95" fill="none" stroke="#ef4444" stroke-width="2" stroke-linejoin="round"/><circle cx="321.20" cy="636.67" r="1.8" fill="#fff" stroke="#ef4444" stroke-width="1.9"/><circle cx="336.95" cy="626.98" r="1.8" fill="#fff" stroke="#ef4444" stroke-width="1.9"/><circle cx="352.70" cy="626.71" r="1.8" fill="#fff" stroke="#ef4444" stroke-width="1.9"/><circle cx="368.45" cy="627.12" r="1.8" fill="#fff" stroke="#ef4444" stroke-width="1.9"/><circle cx="384.20" cy="627.12" r="1.8" fill="#fff" stroke="#ef4444" stroke-width="1.9"/><circle cx="399.95" cy="627.12" r="1.8" fill="#fff" stroke="#ef4444" stroke-width="1.9"/><circle cx="415.70" cy="627.12" r="1.8" fill="#fff" stroke="#ef4444" stroke-width="1.9"/><circle cx="431.45" cy="627.12" r="1.8" fill="#fff" stroke="#ef4444" stroke-width="1.9"/><circle cx="447.20" cy="627.39" r="1.8" fill="#fff" stroke="#ef4444" stroke-width="1.9"/><circle cx="462.95" cy="627.12" r="1.8" fill="#fff" stroke="#ef4444" stroke-width="1.9"/><circle cx="478.70" cy="627.12" r="1.8" fill="#fff" stroke="#ef4444" stroke-width="1.9"/><circle cx="494.45" cy="627.12" r="1.8" fill="#fff" stroke="#ef4444" stroke-width="1.9"/><circle cx="510.20" cy="627.12" r="1.8" fill="#fff" stroke="#ef4444" stroke-width="1.9"/><circle cx="525.95" cy="627.12" r="1.8" fill="#fff" stroke="#ef4444" stroke-width="1.9"/><circle cx="541.70" cy="627.12" r="1.8" fill="#fff" stroke="#ef4444" stroke-width="1.9"/><circle cx="557.45" cy="627.12" r="1.8" fill="#fff" stroke="#ef4444" stroke-width="1.9"/><circle cx="573.20" cy="627.12" r="1.8" fill="#fff" stroke="#ef4444" stroke-width="1.9"/><circle cx="588.95" cy="627.12" r="1.8" fill="#fff" stroke="#ef4444" stroke-width="1.9"/><circle cx="604.70" cy="627.12" r="1.8" fill="#fff" stroke="#ef4444" stroke-width="1.9"/><circle cx="620.45" cy="627.12" r="1.8" fill="#fff" stroke="#ef4444" stroke-width="1.9"/><circle cx="636.20" cy="627.12" r="1.8" fill="#fff" stroke="#ef4444" stroke-width="1.9"/><circle cx="651.95" cy="627.12" r="1.8" fill="#fff" stroke="#ef4444" stroke-width="1.9"/><circle cx="667.70" cy="627.12" r="1.8" fill="#fff" stroke="#ef4444" stroke-width="1.9"/><circle cx="683.45" cy="626.98" r="1.8" fill="#fff" stroke="#ef4444" stroke-width="1.9"/><circle cx="699.20" cy="633.95" r="1.8" fill="#fff" stroke="#ef4444" stroke-width="1.9"/><path d="M321.20 640.09C326.45 638.40 331.70 635.04 336.95 635.04C342.20 635.04 347.45 635.04 352.70 635.04C357.95 635.04 363.20 635.31 368.45 635.31C373.70 635.31 378.95 635.31 384.20 635.31C389.45 635.31 394.70 635.31 399.95 635.31C405.20 635.31 410.45 635.31 415.70 635.31C420.95 635.31 426.20 635.31 431.45 635.31C436.70 635.31 441.95 635.31 447.20 635.31C452.45 635.31 457.70 635.31 462.95 635.31C468.20 635.31 473.45 635.31 478.70 635.31C483.95 635.31 489.20 635.31 494.45 635.31C499.70 635.31 504.95 635.31 510.20 635.31C515.45 635.31 520.70 635.31 525.95 635.31C531.20 635.31 536.45 635.31 541.70 635.31C546.95 635.31 552.20 635.31 557.45 635.31C562.70 635.31 567.95 635.31 573.20 635.31C578.45 635.31 583.70 635.31 588.95 635.31C594.20 635.31 599.45 635.31 604.70 635.31C609.95 635.31 615.20 635.31 620.45 635.31C625.70 635.31 630.95 635.31 636.20 635.31C641.45 635.31 646.70 635.31 651.95 635.31C657.20 635.31 662.45 635.31 667.70 635.31C672.95 635.31 678.20 635.31 683.45 635.31C688.70 635.31 693.95 637.68 699.20 638.86" fill="none" stroke="#6b7280" stroke-width="2" stroke-linejoin="round"/><circle cx="321.20" cy="640.09" r="1.8" fill="#fff" stroke="#6b7280" stroke-width="1.9"/><circle cx="336.95" cy="635.04" r="1.8" fill="#fff" stroke="#6b7280" stroke-width="1.9"/><circle cx="352.70" cy="635.04" r="1.8" fill="#fff" stroke="#6b7280" stroke-width="1.9"/><circle cx="368.45" cy="635.31" r="1.8" fill="#fff" stroke="#6b7280" stroke-width="1.9"/><circle cx="384.20" cy="635.31" r="1.8" fill="#fff" stroke="#6b7280" stroke-width="1.9"/><circle cx="399.95" cy="635.31" r="1.8" fill="#fff" stroke="#6b7280" stroke-width="1.9"/><circle cx="415.70" cy="635.31" r="1.8" fill="#fff" stroke="#6b7280" stroke-width="1.9"/><circle cx="431.45" cy="635.31" r="1.8" fill="#fff" stroke="#6b7280" stroke-width="1.9"/><circle cx="447.20" cy="635.31" r="1.8" fill="#fff" stroke="#6b7280" stroke-width="1.9"/><circle cx="462.95" cy="635.31" r="1.8" fill="#fff" stroke="#6b7280" stroke-width="1.9"/><circle cx="478.70" cy="635.31" r="1.8" fill="#fff" stroke="#6b7280" stroke-width="1.9"/><circle cx="494.45" cy="635.31" r="1.8" fill="#fff" stroke="#6b7280" stroke-width="1.9"/><circle cx="510.20" cy="635.31" r="1.8" fill="#fff" stroke="#6b7280" stroke-width="1.9"/><circle cx="525.95" cy="635.31" r="1.8" fill="#fff" stroke="#6b7280" stroke-width="1.9"/><circle cx="541.70" cy="635.31" r="1.8" fill="#fff" stroke="#6b7280" stroke-width="1.9"/><circle cx="557.45" cy="635.31" r="1.8" fill="#fff" stroke="#6b7280" stroke-width="1.9"/><circle cx="573.20" cy="635.31" r="1.8" fill="#fff" stroke="#6b7280" stroke-width="1.9"/><circle cx="588.95" cy="635.31" r="1.8" fill="#fff" stroke="#6b7280" stroke-width="1.9"/><circle cx="604.70" cy="635.31" r="1.8" fill="#fff" stroke="#6b7280" stroke-width="1.9"/><circle cx="620.45" cy="635.31" r="1.8" fill="#fff" stroke="#6b7280" stroke-width="1.9"/><circle cx="636.20" cy="635.31" r="1.8" fill="#fff" stroke="#6b7280" stroke-width="1.9"/><circle cx="651.95" cy="635.31" r="1.8" fill="#fff" stroke="#6b7280" stroke-width="1.9"/><circle cx="667.70" cy="635.31" r="1.8" fill="#fff" stroke="#6b7280" stroke-width="1.9"/><circle cx="683.45" cy="635.31" r="1.8" fill="#fff" stroke="#6b7280" stroke-width="1.9"/><circle cx="699.20" cy="638.86" r="1.8" fill="#fff" stroke="#6b7280" stroke-width="1.9"/><line x1="329.10" y1="490.40" x2="354.10" y2="490.40" stroke="#3b82f6" stroke-width="2"/><circle cx="341.60" cy="490.40" r="5.6" fill="#fff" stroke="#3b82f6" stroke-width="2"/><text x="359.10" y="493.80" font-size="12" fill="#1f2937">running</text><line x1="409.70" y1="490.40" x2="434.70" y2="490.40" stroke="#10b981" stroke-width="2"/><circle cx="422.20" cy="490.40" r="5.6" fill="#fff" stroke="#10b981" stroke-width="2"/><text x="439.70" y="493.80" font-size="12" fill="#1f2937">succeeded</text><line x1="509.10" y1="490.40" x2="534.10" y2="490.40" stroke="#ef4444" stroke-width="2"/><circle cx="521.60" cy="490.40" r="5.6" fill="#fff" stroke="#ef4444" stroke-width="2"/><text x="539.10" y="493.80" font-size="12" fill="#1f2937">failed</text><line x1="578.60" y1="490.40" x2="603.60" y2="490.40" stroke="#6b7280" stroke-width="2"/><circle cx="591.10" cy="490.40" r="5.6" fill="#fff" stroke="#6b7280" stroke-width="2"/><text x="608.60" y="493.80" font-size="12" fill="#1f2937">cancelled</text></g><g clip-path="url(#cr)"><line x1="784.60" y1="643.50" x2="1172.90" y2="643.50" stroke="#e5e7eb" stroke-width="1"/><text x="776.20" y="647.10" text-anchor="end" font-size="12" fill="#1f2937">0</text><line x1="784.60" y1="623.13" x2="1172.90" y2="623.13" stroke="#e5e7eb" stroke-width="1"/><text x="776.20" y="626.73" text-anchor="end" font-size="12" fill="#1f2937">200</text><line x1="784.60" y1="602.77" x2="1172.90" y2="602.77" stroke="#e5e7eb" stroke-width="1"/><text x="776.20" y="606.37" text-anchor="end" font-size="12" fill="#1f2937">400</text><line x1="784.60" y1="582.40" x2="1172.90" y2="582.40" stroke="#e5e7eb" stroke-width="1"/><text x="776.20" y="586.00" text-anchor="end" font-size="12" fill="#1f2937">600</text><line x1="784.60" y1="562.04" x2="1172.90" y2="562.04" stroke="#e5e7eb" stroke-width="1"/><text x="776.20" y="565.64" text-anchor="end" font-size="12" fill="#1f2937">800</text><line x1="784.60" y1="541.67" x2="1172.90" y2="541.67" stroke="#e5e7eb" stroke-width="1"/><text x="776.20" y="545.27" text-anchor="end" font-size="12" fill="#1f2937">1,000</text><line x1="784.60" y1="521.30" x2="1172.90" y2="521.30" stroke="#e5e7eb" stroke-width="1"/><text x="776.20" y="524.90" text-anchor="end" font-size="12" fill="#1f2937">1,200</text><line x1="784.60" y1="645.50" x2="784.60" y2="650.00" stroke="#d8dbe0" stroke-width="1"/><line x1="816.95" y1="645.50" x2="816.95" y2="650.00" stroke="#d8dbe0" stroke-width="1"/><line x1="849.30" y1="645.50" x2="849.30" y2="650.00" stroke="#d8dbe0" stroke-width="1"/><line x1="881.65" y1="645.50" x2="881.65" y2="650.00" stroke="#d8dbe0" stroke-width="1"/><line x1="914.00" y1="645.50" x2="914.00" y2="650.00" stroke="#d8dbe0" stroke-width="1"/><line x1="946.35" y1="645.50" x2="946.35" y2="650.00" stroke="#d8dbe0" stroke-width="1"/><line x1="978.70" y1="645.50" x2="978.70" y2="650.00" stroke="#d8dbe0" stroke-width="1"/><line x1="1011.05" y1="645.50" x2="1011.05" y2="650.00" stroke="#d8dbe0" stroke-width="1"/><line x1="1043.40" y1="645.50" x2="1043.40" y2="650.00" stroke="#d8dbe0" stroke-width="1"/><line x1="1075.75" y1="645.50" x2="1075.75" y2="650.00" stroke="#d8dbe0" stroke-width="1"/><line x1="1108.10" y1="645.50" x2="1108.10" y2="650.00" stroke="#d8dbe0" stroke-width="1"/><line x1="1140.45" y1="645.50" x2="1140.45" y2="650.00" stroke="#d8dbe0" stroke-width="1"/><line x1="1172.80" y1="645.50" x2="1172.80" y2="650.00" stroke="#d8dbe0" stroke-width="1"/><text transform="translate(787.10 654.50) rotate(-45)" text-anchor="end" font-size="10" fill="#1f2937">2025-11-25 22:00</text><text transform="translate(819.45 654.50) rotate(-45)" text-anchor="end" font-size="10" fill="#1f2937">2025-11-26 00:00</text><text transform="translate(851.80 654.50) rotate(-45)" text-anchor="end" font-size="10" fill="#1f2937">2025-11-26 02:00</text><text transform="translate(884.15 654.50) rotate(-45)" text-anchor="end" font-size="10" fill="#1f2937">2025-11-26 04:00</text><text transform="translate(916.50 654.50) rotate(-45)" text-anchor="end" font-size="10" fill="#1f2937">2025-11-26 06:00</text><text transform="translate(948.85 654.50) rotate(-45)" text-anchor="end" font-size="10" fill="#1f2937">2025-11-26 08:00</text><text transform="translate(981.20 654.50) rotate(-45)" text-anchor="end" font-size="10" fill="#1f2937">2025-11-26 10:00</text><text transform="translate(1013.55 654.50) rotate(-45)" text-anchor="end" font-size="10" fill="#1f2937">2025-11-26 12:00</text><text transform="translate(1045.90 654.50) rotate(-45)" text-anchor="end" font-size="10" fill="#1f2937">2025-11-26 14:00</text><text transform="translate(1078.25 654.50) rotate(-45)" text-anchor="end" font-size="10" fill="#1f2937">2025-11-26 16:00</text><text transform="translate(1110.60 654.50) rotate(-45)" text-anchor="end" font-size="10" fill="#1f2937">2025-11-26 18:00</text><text transform="translate(1142.95 654.50) rotate(-45)" text-anchor="end" font-size="10" fill="#1f2937">2025-11-26 20:00</text><text transform="translate(1175.30 654.50) rotate(-45)" text-anchor="end" font-size="10" fill="#1f2937">2025-11-26 22:00*</text><path d="M784.60 597.98C789.99 578.36 795.38 541.36 800.77 539.12C806.17 536.88 811.56 536.88 816.95 536.88C822.34 536.88 827.73 539.63 833.12 539.63C838.52 539.63 843.91 539.63 849.30 539.63C854.69 539.63 860.08 539.63 865.48 539.63C870.87 539.63 876.26 539.63 881.65 539.63C887.04 539.63 892.43 539.63 897.83 539.63C903.22 539.63 908.61 540.35 914.00 540.35C919.39 540.35 924.78 539.63 930.18 539.63C935.57 539.63 940.96 539.63 946.35 539.63C951.74 539.63 957.13 539.63 962.53 539.63C967.92 539.63 973.31 539.63 978.70 539.63C984.09 539.63 989.48 539.63 994.88 539.63C1000.27 539.63 1005.66 539.63 1011.05 539.63C1016.44 539.63 1021.83 539.63 1027.22 539.63C1032.62 539.63 1038.01 539.63 1043.40 539.63C1048.79 539.63 1054.18 539.63 1059.58 539.63C1064.97 539.63 1070.36 539.63 1075.75 539.63C1081.14 539.63 1086.53 539.63 1091.92 539.63C1097.32 539.63 1102.71 539.63 1108.10 539.63C1113.49 539.63 1118.88 539.63 1124.28 539.63C1129.67 539.63 1135.06 539.63 1140.45 539.63C1145.84 539.63 1151.23 539.53 1156.62 539.53C1162.02 539.53 1167.41 569.54 1172.80 584.54" fill="none" stroke="#8b5cf6" stroke-width="2" stroke-linejoin="round"/><circle cx="784.60" cy="597.98" r="1.8" fill="#fff" stroke="#8b5cf6" stroke-width="1.9"/><circle cx="800.77" cy="539.12" r="1.8" fill="#fff" stroke="#8b5cf6" stroke-width="1.9"/><circle cx="816.95" cy="536.88" r="1.8" fill="#fff" stroke="#8b5cf6" stroke-width="1.9"/><circle cx="833.12" cy="539.63" r="1.8" fill="#fff" stroke="#8b5cf6" stroke-width="1.9"/><circle cx="849.30" cy="539.63" r="1.8" fill="#fff" stroke="#8b5cf6" stroke-width="1.9"/><circle cx="865.48" cy="539.63" r="1.8" fill="#fff" stroke="#8b5cf6" stroke-width="1.9"/><circle cx="881.65" cy="539.63" r="1.8" fill="#fff" stroke="#8b5cf6" stroke-width="1.9"/><circle cx="897.83" cy="539.63" r="1.8" fill="#fff" stroke="#8b5cf6" stroke-width="1.9"/><circle cx="914.00" cy="540.35" r="1.8" fill="#fff" stroke="#8b5cf6" stroke-width="1.9"/><circle cx="930.18" cy="539.63" r="1.8" fill="#fff" stroke="#8b5cf6" stroke-width="1.9"/><circle cx="946.35" cy="539.63" r="1.8" fill="#fff" stroke="#8b5cf6" stroke-width="1.9"/><circle cx="962.53" cy="539.63" r="1.8" fill="#fff" stroke="#8b5cf6" stroke-width="1.9"/><circle cx="978.70" cy="539.63" r="1.8" fill="#fff" stroke="#8b5cf6" stroke-width="1.9"/><circle cx="994.88" cy="539.63" r="1.8" fill="#fff" stroke="#8b5cf6" stroke-width="1.9"/><circle cx="1011.05" cy="539.63" r="1.8" fill="#fff" stroke="#8b5cf6" stroke-width="1.9"/><circle cx="1027.22" cy="539.63" r="1.8" fill="#fff" stroke="#8b5cf6" stroke-width="1.9"/><circle cx="1043.40" cy="539.63" r="1.8" fill="#fff" stroke="#8b5cf6" stroke-width="1.9"/><circle cx="1059.58" cy="539.63" r="1.8" fill="#fff" stroke="#8b5cf6" stroke-width="1.9"/><circle cx="1075.75" cy="539.63" r="1.8" fill="#fff" stroke="#8b5cf6" stroke-width="1.9"/><circle cx="1091.92" cy="539.63" r="1.8" fill="#fff" stroke="#8b5cf6" stroke-width="1.9"/><circle cx="1108.10" cy="539.63" r="1.8" fill="#fff" stroke="#8b5cf6" stroke-width="1.9"/><circle cx="1124.28" cy="539.63" r="1.8" fill="#fff" stroke="#8b5cf6" stroke-width="1.9"/><circle cx="1140.45" cy="539.63" r="1.8" fill="#fff" stroke="#8b5cf6" stroke-width="1.9"/><circle cx="1156.62" cy="539.53" r="1.8" fill="#fff" stroke="#8b5cf6" stroke-width="1.9"/><circle cx="1172.80" cy="584.54" r="1.8" fill="#fff" stroke="#8b5cf6" stroke-width="1.9"/><path d="M784.60 643.50C789.99 643.50 795.38 643.50 800.77 643.50C806.17 643.50 811.56 643.50 816.95 643.50C822.34 643.50 827.73 643.50 833.12 643.50C838.52 643.50 843.91 643.50 849.30 643.50C854.69 643.50 860.08 643.50 865.48 643.50C870.87 643.50 876.26 643.50 881.65 643.50C887.04 643.50 892.43 643.50 897.83 643.50C903.22 643.50 908.61 643.50 914.00 643.50C919.39 643.50 924.78 643.50 930.18 643.50C935.57 643.50 940.96 643.50 946.35 643.50C951.74 643.50 957.13 643.50 962.53 643.50C967.92 643.50 973.31 643.50 978.70 643.50C984.09 643.50 989.48 643.50 994.88 643.50C1000.27 643.50 1005.66 643.50 1011.05 643.50C1016.44 643.50 1021.83 643.50 1027.22 643.50C1032.62 643.50 1038.01 643.50 1043.40 643.50C1048.79 643.50 1054.18 643.50 1059.58 643.50C1064.97 643.50 1070.36 643.50 1075.75 643.50C1081.14 643.50 1086.53 643.50 1091.92 643.50C1097.32 643.50 1102.71 643.50 1108.10 643.50C1113.49 643.50 1118.88 643.50 1124.28 643.50C1129.67 643.50 1135.06 643.50 1140.45 643.50C1145.84 643.50 1151.23 643.50 1156.62 643.50C1162.02 643.50 1167.41 643.50 1172.80 643.50" fill="none" stroke="#06b6d4" stroke-width="2" stroke-linejoin="round"/><circle cx="784.60" cy="643.50" r="1.8" fill="#fff" stroke="#06b6d4" stroke-width="1.9"/><circle cx="800.77" cy="643.50" r="1.8" fill="#fff" stroke="#06b6d4" stroke-width="1.9"/><circle cx="816.95" cy="643.50" r="1.8" fill="#fff" stroke="#06b6d4" stroke-width="1.9"/><circle cx="833.12" cy="643.50" r="1.8" fill="#fff" stroke="#06b6d4" stroke-width="1.9"/><circle cx="849.30" cy="643.50" r="1.8" fill="#fff" stroke="#06b6d4" stroke-width="1.9"/><circle cx="865.48" cy="643.50" r="1.8" fill="#fff" stroke="#06b6d4" stroke-width="1.9"/><circle cx="881.65" cy="643.50" r="1.8" fill="#fff" stroke="#06b6d4" stroke-width="1.9"/><circle cx="897.83" cy="643.50" r="1.8" fill="#fff" stroke="#06b6d4" stroke-width="1.9"/><circle cx="914.00" cy="643.50" r="1.8" fill="#fff" stroke="#06b6d4" stroke-width="1.9"/><circle cx="930.18" cy="643.50" r="1.8" fill="#fff" stroke="#06b6d4" stroke-width="1.9"/><circle cx="946.35" cy="643.50" r="1.8" fill="#fff" stroke="#06b6d4" stroke-width="1.9"/><circle cx="962.53" cy="643.50" r="1.8" fill="#fff" stroke="#06b6d4" stroke-width="1.9"/><circle cx="978.70" cy="643.50" r="1.8" fill="#fff" stroke="#06b6d4" stroke-width="1.9"/><circle cx="994.88" cy="643.50" r="1.8" fill="#fff" stroke="#06b6d4" stroke-width="1.9"/><circle cx="1011.05" cy="643.50" r="1.8" fill="#fff" stroke="#06b6d4" stroke-width="1.9"/><circle cx="1027.22" cy="643.50" r="1.8" fill="#fff" stroke="#06b6d4" stroke-width="1.9"/><circle cx="1043.40" cy="643.50" r="1.8" fill="#fff" stroke="#06b6d4" stroke-width="1.9"/><circle cx="1059.58" cy="643.50" r="1.8" fill="#fff" stroke="#06b6d4" stroke-width="1.9"/><circle cx="1075.75" cy="643.50" r="1.8" fill="#fff" stroke="#06b6d4" stroke-width="1.9"/><circle cx="1091.92" cy="643.50" r="1.8" fill="#fff" stroke="#06b6d4" stroke-width="1.9"/><circle cx="1108.10" cy="643.50" r="1.8" fill="#fff" stroke="#06b6d4" stroke-width="1.9"/><circle cx="1124.28" cy="643.50" r="1.8" fill="#fff" stroke="#06b6d4" stroke-width="1.9"/><circle cx="1140.45" cy="643.50" r="1.8" fill="#fff" stroke="#06b6d4" stroke-width="1.9"/><circle cx="1156.62" cy="643.50" r="1.8" fill="#fff" stroke="#06b6d4" stroke-width="1.9"/><circle cx="1172.80" cy="643.50" r="1.8" fill="#fff" stroke="#06b6d4" stroke-width="1.9"/><line x1="767.40" y1="500.40" x2="792.40" y2="500.40" stroke="#3b82f6" stroke-width="2"/><circle cx="779.90" cy="500.40" r="5.6" fill="#fff" stroke="#3b82f6" stroke-width="2"/><text x="797.40" y="503.80" font-size="12" fill="#1f2937">call</text><line x1="826.50" y1="500.40" x2="851.50" y2="500.40" stroke="#10b981" stroke-width="2"/><circle cx="839.00" cy="500.40" r="5.6" fill="#fff" stroke="#10b981" stroke-width="2"/><text x="856.50" y="503.80" font-size="12" fill="#1f2937">event</text><line x1="897.30" y1="500.40" x2="922.30" y2="500.40" stroke="#8b5cf6" stroke-width="2"/><circle cx="909.80" cy="500.40" r="5.6" fill="#fff" stroke="#8b5cf6" stroke-width="2"/><text x="927.30" y="503.80" font-size="12" fill="#1f2937">schedule</text><line x1="986.10" y1="500.40" x2="1011.10" y2="500.40" stroke="#f59e0b" stroke-width="2"/><circle cx="998.60" cy="500.40" r="5.6" fill="#fff" stroke="#f59e0b" stroke-width="2"/><text x="1016.10" y="503.80" font-size="12" fill="#1f2937">run</text><line x1="1044.40" y1="500.40" x2="1069.40" y2="500.40" stroke="#ec4899" stroke-width="2"/><circle cx="1056.90" cy="500.40" r="5.6" fill="#fff" stroke="#ec4899" stroke-width="2"/><text x="1074.40" y="503.80" font-size="12" fill="#1f2937">eval</text><line x1="1107.20" y1="500.40" x2="1132.20" y2="500.40" stroke="#06b6d4" stroke-width="2"/><circle cx="1119.70" cy="500.40" r="5.6" fill="#fff" stroke="#06b6d4" stroke-width="2"/><text x="1137.20" y="503.80" font-size="12" fill="#1f2937">repl</text></g></svg>
</body></html>
